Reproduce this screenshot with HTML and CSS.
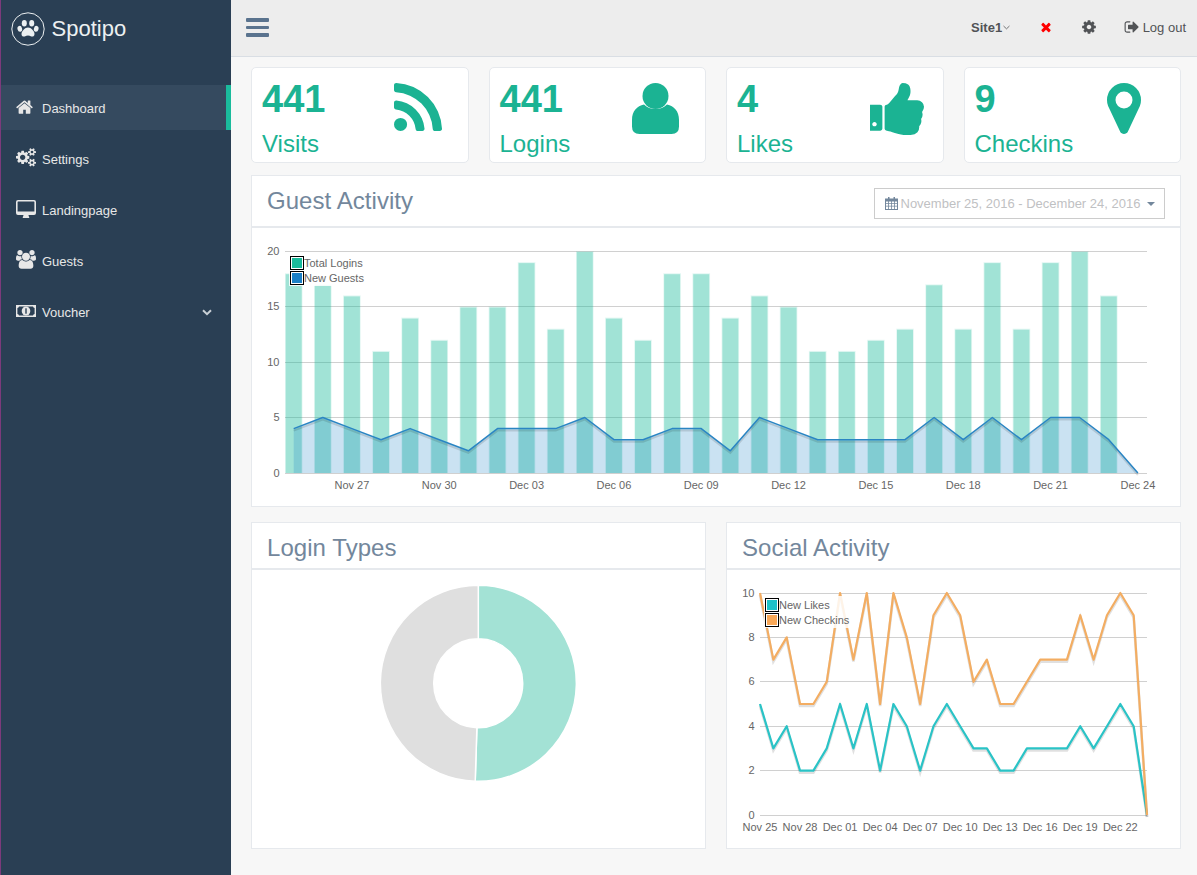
FILE: index.html
```html
<!DOCTYPE html>
<html lang="en">
<head>
<meta charset="utf-8">
<title>Spotipo Dashboard</title>
<link rel="stylesheet" href="styles.css">
</head>
<body>
<div class="app">
  <aside class="sidebar">
    <div class="brand">
      <svg class="brand-logo" viewBox="0 0 34 34"><circle cx="17" cy="17" r="16.2" fill="none" stroke="#ecf0f1" stroke-width="1"/><g fill="#ecf0f1"><ellipse cx="13.3" cy="11.2" rx="2.5" ry="3.3"/><ellipse cx="20.7" cy="11.2" rx="2.5" ry="3.3"/><ellipse cx="8.8" cy="16.8" rx="2.3" ry="3" transform="rotate(-15 8.8 16.8)"/><ellipse cx="25.2" cy="16.8" rx="2.3" ry="3" transform="rotate(15 25.2 16.8)"/><path d="M17 15.5c3 0 6.500 3.500 6.500 6.500 0 2.500-2 2.800-3.200 2.400-1.200-.4-2.300-.8-3.300-.8s-2.100.4-3.300.8c-1.200.4-3.200.1-3.200-2.400 0-3 3.500-6.500 6.500-6.500z"/></g></svg>
      <span class="brand-name">Spotipo</span>
    </div>
    <nav class="nav">
      <a class="nav-item active"><span class="nav-icon"><svg class="ico-home" viewBox="64 128 1664 1408"><path d="M1472 992v480q0 26-19 45t-45 19h-384v-384h-256v384h-384q-26 0-45-19t-19-45v-480q0-1 .5-3t.5-3l575-474 575 474q1 2 1 6zm223-69l-62 74q-8 9-21 11h-3q-13 0-21-7l-692-577-692 577q-12 8-24 7-13-2-21-11l-62-74q-8-10-7-23.500t11-21.500l719-599q32-26 76-26t76 26l244 204v-195q0-14 9-23t23-9h192q14 0 23 9t9 23v408l219 182q10 8 11 21.500t-7 23.500z"/></svg></span>Dashboard</a>
      <a class="nav-item"><span class="nav-icon"><svg class="ico-wide" viewBox="0 0 1920 1792"><path d="M896 896q0-106-75-181t-181-75-181 75-75 181 75 181 181 75 181-75 75-181zm768 512q0-52-38-90t-90-38-90 38-38 90q0 53 37.500 90.500t90.500 37.500 90.500-37.500 37.500-90.500zm0-1024q0-52-38-90t-90-38-90 38-38 90q0 53 37.500 90.500t90.500 37.500 90.500-37.500 37.500-90.500zm-384 421v185q0 10-7 19.500t-16 10.500l-155 24q-11 35-32 76 34 48 90 115 7 11 7 20 0 12-7 19-23 30-82.500 89.500t-78.500 59.500q-11 0-21-7l-115-90q-37 19-77 31-11 108-23 155-7 24-30 24h-186q-11 0-20-7.500t-10-17.500l-23-153q-34-10-75-31l-118 89q-7 7-20 7-11 0-21-8-144-133-144-160 0-9 7-19 10-14 41-53t47-61q-23-44-35-82l-152-24q-10-1-17-9.500t-7-19.500v-185q0-10 7-19.500t16-10.500l155-24q11-35 32-76-34-48-90-115-7-11-7-20 0-12 7-20 22-30 82-89t79-59q11 0 21 7l115 90q34-18 77-32 11-108 23-154 7-24 30-24h186q11 0 20 7.500t10 17.500l23 153q34 10 75 31l118-89q8-7 20-7 11 0 21 8 144 133 144 160 0 8-7 19-12 16-42 54t-45 60q23 48 34 82l152 23q10 2 17 10.500t7 19.500zm640 533v140q0 16-149 31-12 27-30 52 51 113 51 138 0 4-4 7-122 71-124 71-8 0-46-47t-52-68q-20 2-30 2t-30-2q-14 21-52 68t-46 47q-2 0-124-71-4-3-4-7 0-25 51-138-18-25-30-52-149-15-149-31v-140q0-16 149-31 13-29 30-52-51-113-51-138 0-4 4-7 4-2 35-20t59-34 30-16q8 0 46 46.500t52 67.500q20-2 30-2t30 2q51-71 92-112l6-2q4 0 124 70 4 3 4 7 0 25-51 138 17 23 30 52 149 15 149 31zm0-1024v140q0 16-149 31-12 27-30 52 51 113 51 138 0 4-4 7-122 71-124 71-8 0-46-47t-52-68q-20 2-30 2t-30-2q-14 21-52 68t-46 47q-2 0-124-71-4-3-4-7 0-25 51-138-18-25-30-52-149-15-149-31v-140q0-16 149-31 13-29 30-52-51-113-51-138 0-4 4-7 4-2 35-20t59-34 30-16q8 0 46 46.500t52 67.500q20-2 30-2t30 2q51-71 92-112l6-2q4 0 124 70 4 3 4 7 0 25-51 138 17 23 30 52 149 15 149 31z"/></svg></span>Settings</a>
      <a class="nav-item"><span class="nav-icon"><svg class="ico-desktop" viewBox="0 0 20 18"><path fill-rule="evenodd" d="M2 0h16a2 2 0 0 1 2 2v11a2 2 0 0 1-2 2h-5.500c0 1 .8 2 .8 2.500a.5.5 0 0 1-.6.5h-5.400a.5.5 0 0 1-.6-.5c0-.5.8-1.500.8-2.500H2a2 2 0 0 1-2-2V2a2 2 0 0 1 2-2zM2 1.600a.4.4 0 0 0-.4.4v9.400h16.800V2a.4.4 0 0 0-.4-.4z"/></svg></span>Landingpage</a>
      <a class="nav-item"><span class="nav-icon"><svg class="ico-wide" viewBox="0 0 1920 1792"><path d="M593 896q-162 5-265 128h-134q-82 0-138-40.500t-56-118.500q0-353 124-353 6 0 43.500 21t97.500 42.500 119 21.500q67 0 133-23-5 37-5 66 0 139 81 256zm1071 637q0 120-73 189.500t-194 69.500h-874q-121 0-194-69.500t-73-189.500q0-53 3.500-103.500t14-109 26.500-108.500 43-97.500 62-81 85.500-53.500 111.500-20q10 0 43 21.500t73 48 107 48 135 21.500 135-21.500 107-48 73-48 43-21.500q61 0 111.500 20t85.500 53.500 62 81 43 97.500 26.500 108.500 14 109 3.500 103.500zm-1024-1277q0 106-75 181t-181 75-181-75-75-181 75-181 181-75 181 75 75 181zm704 384q0 159-112.500 271.500t-271.500 112.500-271.500-112.500-112.500-271.500 112.500-271.500 271.500-112.500 271.500 112.500 112.500 271.500zm576 225q0 78-56 118.500t-138 40.500h-134q-103-123-265-128 81-117 81-256 0-29-5-66 66 23 133 23 59 0 119-21.500t97.500-42.500 43.500-21q124 0 124 353zm-128-609q0 106-75 181t-181 75-181-75-75-181 75-181 181-75 181 75 75 181z"/></svg></span>Guests</a>
      <a class="nav-item"><span class="nav-icon"><svg class="ico-money" viewBox="0 0 20 12"><path fill-rule="evenodd" d="M0 0h20v12H0zM3 1.400a1.800 1.800 0 0 1-1.600 1.600v6a1.800 1.800 0 0 1 1.600 1.600h14a1.800 1.800 0 0 1 1.600-1.600V3a1.800 1.800 0 0 1-1.600-1.600z"/><ellipse cx="10" cy="6" rx="4.300" ry="4.500"/><rect class="ico-money-mark" x="9.300" y="3.300" width="1.400" height="5.400"/></svg></span>Voucher<svg class="nav-chevron" viewBox="0 0 10 7"><path d="M1 1.200l4 4 4-4" fill="none" stroke-width="2"/></svg></a>
    </nav>
  </aside>

  <div class="content">
    <header class="topbar">
      <button class="menu-toggle" type="button" aria-label="Menu"><span></span><span></span><span></span></button>
      <div class="topbar-right">
        <span class="site">Site1<svg viewBox="0 0 8 5"><path d="M.6.8L4 4l3.400-3.200" fill="none" stroke-width=".9"/></svg></span>
        <svg class="top-icon ico-red" viewBox="0 0 1792 1792"><path d="M1490 1322q0 40-28 68l-136 136q-28 28-68 28t-68-28l-294-294-294 294q-28 28-68 28t-68-28l-136-136q-28-28-28-68t28-68l294-294-294-294q-28-28-28-68t28-68l136-136q28-28 68-28t68 28l294 294 294-294q28-28 68-28t68 28l136 136q28 28 28 68t-28 68l-294 294 294 294q28 28 28 68z"/></svg>
        <svg class="top-icon ico-lg" viewBox="0 0 1792 1792"><path d="M1152 896q0-106-75-181t-181-75-181 75-75 181 75 181 181 75 181-75 75-181zm512-109v222q0 12-8 23t-20 13l-185 28q-19 54-39 91 35 50 107 138 10 12 10 25t-9 23q-27 37-99 108t-94 71q-12 0-26-9l-138-108q-44 23-91 38-16 136-29 186-7 28-36 28h-222q-14 0-24.500-8.500t-11.500-21.500l-28-184q-49-16-90-37l-141 107q-10 9-25 9-14 0-25-11-126-114-165-168-7-10-7-23 0-12 8-23 15-21 51-66.500t54-70.500q-27-50-41-99l-183-27q-13-2-21-12.500t-8-23.500v-222q0-12 8-23t19-13l186-28q14-46 39-92-40-57-107-138-10-12-10-24 0-10 9-23 26-36 98.500-107.500t94.500-71.500q13 0 26 10l138 107q44-23 91-38 16-136 29-186 7-28 36-28h222q14 0 24.500 8.500t11.500 21.500l28 184q49 16 90 37l142-107q9-9 24-9 13 0 25 10 129 119 165 170 7 8 7 22 0 12-8 23-15 21-51 66.500t-54 70.500q26 50 41 98l183 28q13 2 21 12.500t8 23.500z"/></svg>
        <a class="logout"><svg class="top-icon ico-lg" viewBox="0 0 1792 1792"><path d="M704 1440q0 4 1 20t.5 26.500-3 23.500-10 19.500-20.500 6.500h-320q-119 0-203.500-84.500t-84.500-203.500v-704q0-119 84.500-203.500t203.500-84.500h320q13 0 22.500 9.500t9.500 22.500q0 4 1 20t.5 26.500-3 23.500-10 19.500-20.500 6.500h-320q-66 0-113 47t-47 113v704q0 66 47 113t113 47h312l11.500 1 11.500 3 8 5.500 7 9 2 13.500zm928-544q0 26-19 45l-544 544q-19 19-45 19t-45-19-19-45v-288h-448q-26 0-45-19t-19-45v-384q0-26 19-45t45-19h448v-288q0-26 19-45t45-19 45 19l544 544q19 19 19 45z"/></svg>Log out</a>
      </div>
    </header>

    <main class="main">
      <section class="stats">
        <div class="stat">
          <div class="stat-text"><div class="stat-num">441</div><div class="stat-label">Visits</div></div>
          <svg class="stat-icon ico-rss" viewBox="192 128 1408 1408"><path d="M576 1344q0 80-56 136t-136 56-136-56-56-136 56-136 136-56 136 56 56 136zm512 123q2 28-17 48-18 21-47 21h-135q-25 0-43-16.500t-20-41.500q-22-229-184.500-391.500t-391.500-184.500q-25-2-41.500-20t-16.500-43v-135q0-29 21-47 17-17 43-17h5q160 13 306 80.500t259 181.500q114 113 181.500 259t80.500 306zm512 2q2 27-18 47-18 20-46 20h-143q-26 0-44.500-17.500t-19.500-42.500q-12-215-101-408.500t-231.500-336-336-231.500-408.500-102q-25-1-42.500-19.500t-17.500-43.500v-143q0-28 20-46 18-18 44-18h3q262 13 501.500 120t425.500 294q187 186 294 425.500t120 501.500z"/></svg>
        </div>
        <div class="stat">
          <div class="stat-text"><div class="stat-num">441</div><div class="stat-label">Logins</div></div>
          <svg class="stat-icon ico-user" viewBox="0 0 47 51"><circle cx="23.500" cy="13" r="13"/><path d="M0 37c0-9 5-14 12-15.500 3 3 7 4.500 11.500 4.500s8.500-1.500 11.500-4.500C42 23 47 28 47 37v6.500Q47 51 39.500 51h-32Q0 51 0 43.500z"/></svg>
        </div>
        <div class="stat">
          <div class="stat-text"><div class="stat-num">4</div><div class="stat-label">Likes</div></div>
          <svg class="stat-icon ico-thumb" viewBox="128 128 1536 1536" preserveAspectRatio="none"><path d="M320 1344q0-26-19-45t-45-19-45 19-19 45 19 45 45 19 45-19 19-45zm160-512v640q0 26-19 45t-45 19h-288q-26 0-45-19t-19-45v-640q0-26 19-45t45-19h288q26 0 45 19t19 45zm1184 0q0 86-55 149 15 44 15 76 3 76-43 137 17 56 0 117-15 57-54 94 9 112-49 181-64 76-197 78h-129q-66 0-144-15.500t-121.500-29-120.500-39.500q-123-43-158-44-26-1-45-19.500t-19-44.500v-641q0-25 18-43.500t43-20.500q24-2 76-59t101-121q68-87 101-120 18-18 31-48t17.500-48.500 13.500-60.500q7-39 12.500-61t19.500-52 34-50q19-19 45-19 46 0 82.500 10.500t60 26 40 40.500 24 45 12 50 5 45 .5 39q0 38-9.500 76t-19 60-27.500 56q-3 6-10 18t-11 22-8 24h277q78 0 135 57t57 135z"/></svg>
        </div>
        <div class="stat">
          <div class="stat-text"><div class="stat-num">9</div><div class="stat-label">Checkins</div></div>
          <svg class="stat-icon ico-pin" viewBox="0 128 1024 1536"><path d="M768 640q0-106-75-181t-181-75-181 75-75 181 75 181 181 75 181-75 75-181zm256 0q0 109-33 179l-364 774q-16 33-47.500 52t-67.500 19-67.500-19-46.500-52l-365-774q-33-70-33-179 0-212 150-362t362-150 362 150 150 362z"/></svg>
        </div>
      </section>

      <section class="panel panel-wide">
        <div class="panel-head panel-head-tall">
          <h2 class="panel-title">Guest Activity</h2>
          <div class="date-range">
            <svg class="date-cal" viewBox="0 0 13 13"><path fill-rule="evenodd" d="M3 0h1.500v1.500h4V0H10v1.500h3V13H0V1.500h3zM1 4.500v1.800h2.200V4.500zm3 0v1.800h2.100V4.500zm2.900 0v1.800H9V4.500zm2.900 0v1.800H12V4.500zM1 7v1.800h2.200V7zm3 0v1.800h2.100V7zm2.900 0v1.800H9V7zm2.900 0v1.800H12V7zM1 9.500V12h2.200V9.500zm3 0V12h2.100V9.500zm2.900 0V12H9V9.500zm2.900 0V12H12V9.500z"/></svg>
            <span class="date-text">November 25, 2016 - December 24, 2016</span>
            <i class="date-caret"></i>
          </div>
        </div>
        <div class="panel-body chart-guest">
          <svg id="guest-chart" class="chart-svg" viewBox="252 228 928 278"></svg>
          <div class="legend legend-guest">
            <div class="legend-row"><i class="swatch sw-teal"></i>Total Logins</div>
            <div class="legend-row"><i class="swatch sw-blue"></i>New Guests</div>
          </div>
        </div>
      </section>

      <section class="lower">
        <div class="panel">
          <div class="panel-head"><h2 class="panel-title">Login Types</h2></div>
          <div class="panel-body chart-lower">
            <svg class="chart-svg" viewBox="252 570 453 278">
              <path class="donut-teal" d="M478.300 585.300A98 98 0 1 1 475.220 781.250L476.900 727.780A44.500 44.500 0 1 0 478.300 638.800Z"/>
              <path class="donut-grey" d="M475.220 781.250A98 98 0 0 1 478.300 585.300L478.300 638.800A44.500 44.500 0 0 0 476.900 727.780Z"/>
            </svg>
          </div>
        </div>
        <div class="panel">
          <div class="panel-head"><h2 class="panel-title">Social Activity</h2></div>
          <div class="panel-body chart-lower">
            <svg id="social-chart" class="chart-svg" viewBox="727 570 453 278"></svg>
            <div class="legend legend-social">
              <div class="legend-row"><i class="swatch sw-cyan"></i>New Likes</div>
              <div class="legend-row"><i class="swatch sw-orange"></i>New Checkins</div>
            </div>
          </div>
        </div>
      </section>
    </main>
  </div>
</div>
<script src="charts.js"></script>
</body>
</html>
```
FILE: styles.css
```css
* { box-sizing: border-box; }
html, body { margin: 0; height: 100%; }
body {
  background: #f7f7f7;
  color: #73879c;
  font-family: "Liberation Sans", Arial, sans-serif;
  font-size: 13px;
  overflow: hidden;
}
.app { display: flex; height: 875px; }

/* sidebar */
.sidebar {
  width: 231px;
  flex: none;
  background: #2a3f54;
  border-left: 1px solid #7c3a7c;
}
.brand { display: flex; align-items: center; height: 57px; padding-left: 10px; }
.brand-logo { width: 34px; height: 34px; flex: none; }
.brand-name { margin-left: 6.500px; color: #ecf0f1; font-size: 22px; }
.nav { margin-top: 28px; display: flex; flex-direction: column; gap: 6px; }
.nav-item {
  display: flex;
  align-items: center;
  height: 45px;
  padding: 2px 0 0 15px;
  color: #e7e7e7;
  font-size: 13px;
}
.nav-item.active {
  background: #354a5f;
  border-right: 5px solid #1abb9c;
}
.nav-icon { width: 26px; flex: none; display: flex; margin-bottom: 4px; }
.nav-icon svg { fill: #e7e7e7; display: block; }
.ico-home { width: 17px; height: 15px; }
.ico-wide { width: 20px; height: 18.700px; }
.ico-desktop { width: 20px; height: 18px; }
.ico-money { width: 20px; height: 12px; }
.ico-money-mark { fill: #2a3f54; }
.nav-chevron { width: 10px; height: 7px; margin-left: auto; margin-right: 19px; stroke: #c9d0d6; }

/* top bar */
.content { flex: 1; min-width: 0; display: flex; flex-direction: column; }
.topbar {
  height: 57px;
  flex: none;
  display: flex;
  align-items: center;
  background: #ededed;
  border-bottom: 1px solid #d9dee4;
  padding: 0 11px 0 15px;
}
.menu-toggle {
  display: flex;
  flex-direction: column;
  gap: 3.600px;
  width: 23px;
  margin-bottom: 1px;
  padding: 0;
  border: 0;
  background: none;
}
.menu-toggle span { display: block; height: 3.800px; background: #5a738e; border-radius: 1px; }
.topbar-right { margin-left: auto; margin-bottom: 2px; display: flex; align-items: center; gap: 29px; color: #515356; }
.site { display: flex; align-items: center; font-weight: 700; }
.site svg { width: 7px; height: 5px; margin-left: .5px; stroke: #515356; }
.top-icon { width: 14px; height: 14px; fill: #515356; display: block; }
.top-icon.ico-lg { width: 16px; height: 16px; margin: 0 -1px; }
.ico-red { fill: #f00; }
.logout { display: flex; align-items: center; gap: 4px; }

/* main */
.main { flex: 1; padding: 10px 16px 0 20px; display: flex; flex-direction: column; }
.stats { display: grid; grid-template-columns: repeat(4, 1fr); gap: 20px; }
.stat {
  height: 96px;
  display: grid;
  grid-template-columns: 142px 1fr;
  background: #fff;
  border: 1px solid #e6e9ed;
  border-radius: 5px;
  color: #1bb393;
}
.stat-text { padding: 11px 0 0 10px; }
.stat-num { font-size: 38px; font-weight: 700; line-height: 40px; }
.stat-label { font-size: 24px; line-height: 28px; margin-top: 11px; }
.stat-icon { fill: #1bb393; display: block; margin-top: 15px; }
.ico-rss { width: 48px; height: 48px; }
.ico-user { width: 47px; height: 51px; }
.ico-thumb { width: 54px; height: 52px; margin-left: 1px; }
.ico-pin { width: 34px; height: 51px; }

.panel { background: #fff; border: 1px solid #e6e9ed; }
.panel-wide { margin-top: 12px; height: 332px; }
.panel-head {
  display: flex;
  justify-content: space-between;
  align-items: flex-start;
  height: 47px;
  padding: 11px 15px 0;
  border-bottom: 2px solid #e6e9ed;
}
.panel-head-tall { height: 52px; }
.panel-title { margin: 0; font-size: 24px; font-weight: 400; line-height: 28px; letter-spacing: .05px; color: #73879c; }
.date-range {
  display: flex;
  align-items: center;
  flex: none;
  width: 291px;
  height: 31px;
  margin-top: 1px;
  padding: 0 9px 0 10px;
  border: 1px solid #ccc;
  color: #bfc1c3;
  font-size: 13px;
}
.date-text { white-space: nowrap; }
.date-cal { width: 13px; height: 13px; fill: #73879c; flex: none; margin-right: 2.500px; }
.date-caret {
  width: 0;
  height: 0;
  flex: none;
  margin-left: auto;
  border-left: 4.500px solid transparent;
  border-right: 4.500px solid transparent;
  border-top: 4px solid #73879c;
}
.panel-body { position: relative; }
.chart-guest { height: 278px; }
.chart-lower { height: 278px; }
.chart-svg { display: block; width: 100%; height: 100%; }
.chart-svg text { font-family: "Liberation Sans", Arial, sans-serif; font-size: 11px; fill: #666; }
.lower { margin-top: 15px; display: grid; grid-template-columns: 1fr 1fr; gap: 20px; }
.lower .panel { height: 327px; }
.donut-teal { fill: #a3e2d5; stroke: #fff; stroke-width: 1.500; }
.donut-grey { fill: #dfdfdf; stroke: #fff; stroke-width: 1.500; }

.legend {
  position: absolute;
  padding: 1px;
  background: rgba(255, 255, 255, 0.85);
  color: #666;
  font-size: 11px;
}
.legend-guest { left: 37px; top: 26px; }
.legend-social { left: 37px; top: 26px; }
.legend-row { display: flex; align-items: center; height: 15px; white-space: nowrap; }
.swatch {
  width: 14px;
  height: 14px;
  flex: none;
  border: 1px solid #000;
  box-shadow: inset 0 0 0 1px #fff;
}
.sw-teal { background: #1abb9c; }
.sw-blue { background: #1c80c6; }
.sw-cyan { background: #1fc2c8; }
.sw-orange { background: #f9a857; }
```
FILE: charts.js
```js
(function () {
  var NS = "http://www.w3.org/2000/svg";
  function el(parent, name, attrs, text) {
    var n = document.createElementNS(NS, name);
    for (var k in attrs) n.setAttribute(k, attrs[k]);
    if (text !== undefined) n.textContent = text;
    parent.appendChild(n);
    return n;
  }
  function crisp(y) { return Math.floor(y - 0.5) + 0.5; }
  function grid(svg, c) {
    c.ticks.forEach(function (t) {
      var y = crisp(c.y(t));
      el(svg, "line", { x1: c.left, x2: c.right, y1: y, y2: y, stroke: "#d0d0d0", "stroke-width": 1 });
      el(svg, "text", { x: c.left - 5.5, y: y + 3.5, "text-anchor": "end" }, String(t));
    });
  }
  function labels(svg, list, x, y) {
    list.forEach(function (l) {
      el(svg, "text", { x: x(l[0]), y: y, "text-anchor": "middle" }, l[1]);
    });
  }
  function line(svg, pts, color, width) {
    var d = pts.map(function (p) { return p[0] + "," + p[1]; }).join(" ");
    el(svg, "polyline", { points: pts.map(function (p) { return p[0] + "," + (p[1] + 2); }).join(" "), fill: "none", stroke: "#000", "stroke-opacity": 0.12, "stroke-width": width + 0.5 });
    el(svg, "polyline", { points: d, fill: "none", stroke: color, "stroke-width": width, "stroke-linejoin": "round" });
  }

  /* Guest activity */
  var gs = document.getElementById("guest-chart");
  var logins = [18,17,16,11,14,12,15,15,19,13,20,14,12,18,18,14,16,15,11,11,12,13,17,13,19,13,19,20,16,0];
  var guests = [4,5,4,3,4,3,2,4,4,4,5,3,3,4,4,2,5,4,3,3,3,3,5,3,5,3,5,5,3,0];
  var gx = function (i) { return 293.7 + i * 29.11; };
  var gy = function (v) { return 473.5 - v * 11.1; };
  var by = function (v) { return 473 - v * 11.1; };
  grid(gs, { ticks: [0,5,10,15,20], y: gy, left: 285, right: 1147 });
  var clip = el(el(gs, "defs", {}), "clipPath", { id: "plot" });
  el(clip, "rect", { x: 285, y: 240, width: 862, height: 233 });
  var bars = el(gs, "g", { "clip-path": "url(#plot)" });
  logins.forEach(function (v, i) {
    if (!v) return;
    el(bars, "rect", { x: gx(i) - 8.8, y: by(v), width: 17.6, height: v * 11.1, fill: "#1abb9c", "fill-opacity": 0.12 });
    el(bars, "rect", { x: gx(i) - 8, y: by(v) + 1, width: 16, height: v * 11.1 - 1, fill: "#1abb9c", "fill-opacity": 0.33 });
  });
  var gpts = guests.map(function (v, i) { return [gx(i), by(v)]; });
  var area = gpts.concat([[gx(29), by(0)], [gx(0), by(0)]]);
  el(gs, "polygon", { points: area.map(function (p) { return p[0] + "," + p[1]; }).join(" "), fill: "#1c80c6", "fill-opacity": 0.23 });
  line(gs, gpts, "#2a85c3", 1.5);
  labels(gs, [[2,"Nov 27"],[5,"Nov 30"],[8,"Dec 03"],[11,"Dec 06"],[14,"Dec 09"],[17,"Dec 12"],[20,"Dec 15"],[23,"Dec 18"],[26,"Dec 21"],[29,"Dec 24"]], gx, 489);

  /* Social activity */
  var ss = document.getElementById("social-chart");
  var checkins = [10,7,8,5,5,6,10,7,10,5,10,8,5,9,10,9,6,7,5,5,6,7,7,7,9,7,9,10,9,0];
  var likes = [5,3,4,2,2,3,5,3,5,2,5,4,2,4,5,4,3,3,2,2,3,3,3,3,4,3,4,5,4,0];
  var sx = function (i) { return 760 + i * 13.345; };
  var sy = function (v) { return 815.5 - v * 22.2; };
  grid(ss, { ticks: [0,2,4,6,8,10], y: sy, left: 760, right: 1147 });
  line(ss, likes.map(function (v, i) { return [sx(i), sy(v) - 0.5]; }), "#2ac3c6", 2.2);
  line(ss, checkins.map(function (v, i) { return [sx(i), sy(v) - 0.5]; }), "#f3ad62", 2.2);
  labels(ss, [[0,"Nov 25"],[3,"Nov 28"],[6,"Dec 01"],[9,"Dec 04"],[12,"Dec 07"],[15,"Dec 10"],[18,"Dec 13"],[21,"Dec 16"],[24,"Dec 19"],[27,"Dec 22"]], sx, 831);
})();
```
